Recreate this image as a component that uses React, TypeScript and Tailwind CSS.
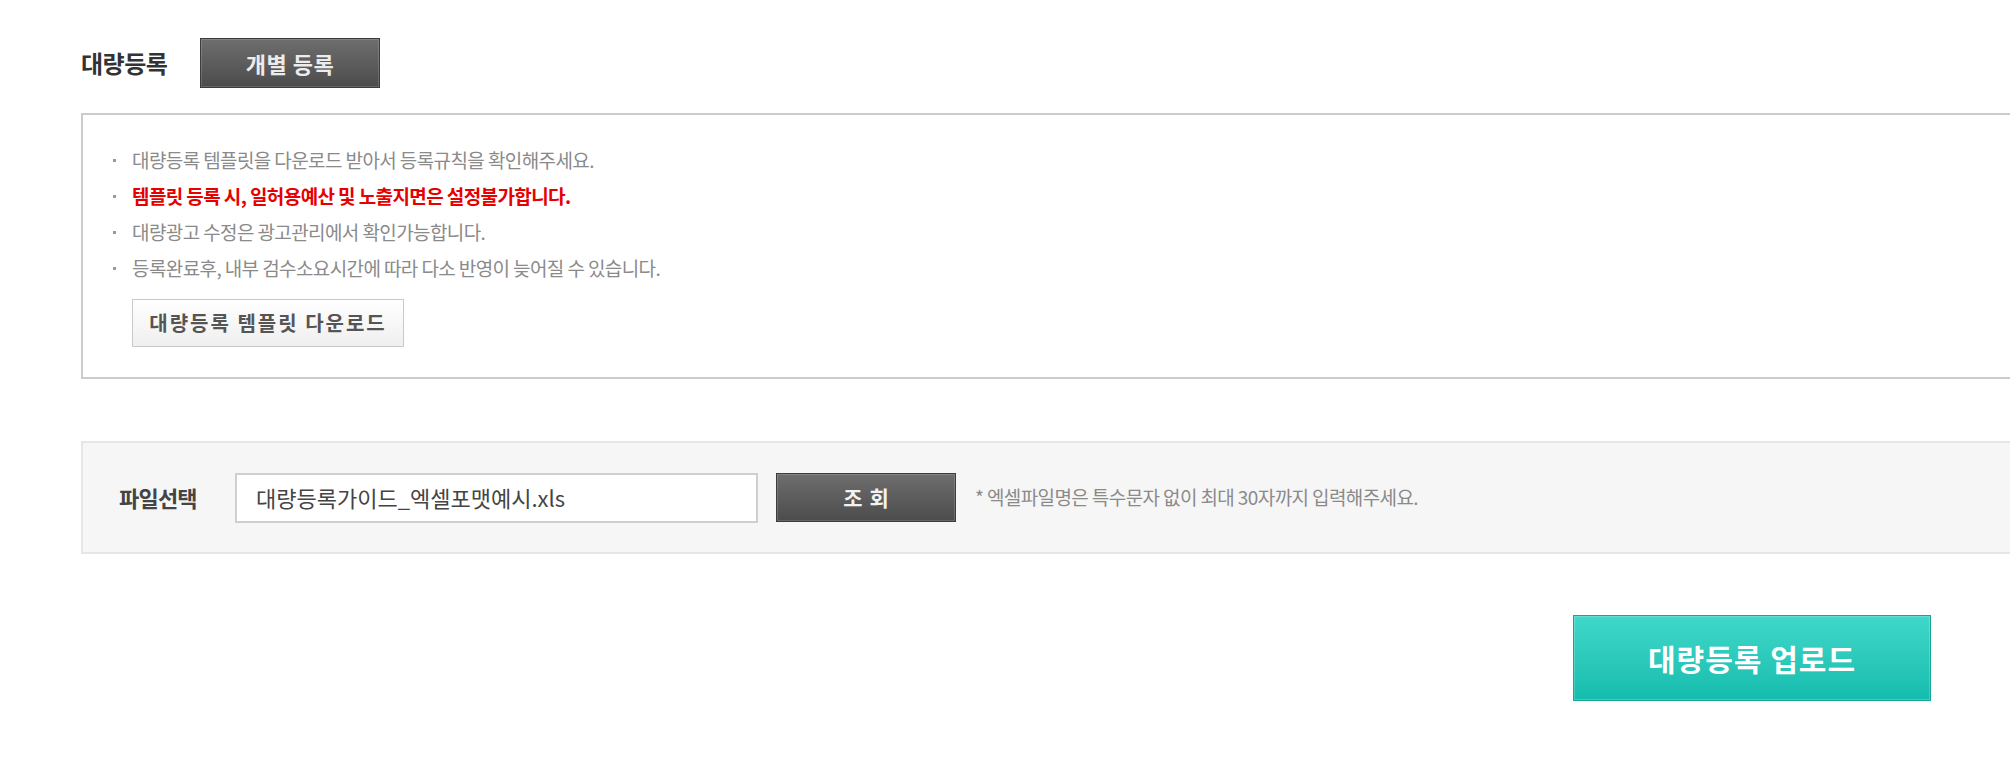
import React from "react";

const notes = [
  { text: "대량등록 템플릿을 다운로드 받아서 등록규칙을 확인해주세요.", red: false },
  { text: "템플릿 등록 시, 일허용예산 및 노출지면은 설정불가합니다.", red: true },
  { text: "대량광고 수정은 광고관리에서 확인가능합니다.", red: false },
  { text: "등록완료후, 내부 검수소요시간에 따라 다소 반영이 늦어질 수 있습니다.", red: false },
];

const App = () => {
  return (
    <div className="w-full min-h-[758px] overflow-hidden bg-white font-['Noto_Sans_CJK_KR','Noto_Sans',sans-serif]">
      <div className="pl-[81px] pt-[38px]">
        {/* title row */}
        <div className="flex items-center h-[50px]">
          <h2 className="text-[24px] font-bold text-[#333] tracking-[-0.5px] w-[119px]">대량등록</h2>
          <button className="w-[180px] h-[50px] border border-[#3c3c3c] bg-gradient-to-b from-[#6e6e6e] to-[#4c4c4c] shadow-[inset_0_0_0_1px_rgba(255,255,255,0.15)] text-[22px] font-bold text-[#ececec] tracking-[0.5px]">
            개별 등록
          </button>
        </div>

        {/* info box */}
        <div className="mt-[25px] w-[2000px] border-2 border-[#cbcbcb] pl-[30px] pt-[27px] pb-[30px]">
          <ul>
            {notes.map((n) => (
              <li key={n.text} className="flex items-center h-[36px]">
                <span className="w-[3px] h-[3px] bg-[#999] mr-[16px]" />
                <span
                  className={
                    n.red
                      ? "text-[19px] font-bold text-[#e60000] tracking-[-0.6px]"
                      : "text-[19px] text-[#8a8a8a] tracking-[-0.6px]"
                  }
                >
                  {n.text}
                </span>
              </li>
            ))}
          </ul>
          <button className="mt-[13px] ml-[19px] w-[272px] h-[48px] border border-[#c9c9c9] bg-gradient-to-b from-white to-[#efefef] text-[20px] font-semibold text-[#555] tracking-[2px]">
            대량등록 템플릿 다운로드
          </button>
        </div>

        {/* file select */}
        <div className="mt-[62px] w-[2000px] h-[113px] border-2 border-[#e6e6e6] bg-[#f6f6f6] flex items-center pl-[36px]">
          <span className="w-[116px] text-[22px] font-bold text-[#444] tracking-[-0.8px]">파일선택</span>
          <div className="w-[523px] h-[50px] border-2 border-[#cfcfcf] bg-white flex items-center pl-[19px] text-[22px] text-[#444]">
            대량등록가이드_엑셀포맷예시.xls
          </div>
          <button className="ml-[18px] w-[180px] h-[49px] border border-[#3c3c3c] bg-gradient-to-b from-[#6e6e6e] to-[#4c4c4c] shadow-[inset_0_0_0_1px_rgba(255,255,255,0.15)] text-[21px] font-bold text-[#f2f2f2] tracking-[7px] pl-[7px]">
            조회
          </button>
          <span className="ml-[19px] text-[19px] text-[#8a8a8a] tracking-[-0.6px]">
            * 엑셀파일명은 특수문자 없이 최대 30자까지 입력해주세요.
          </span>
        </div>

        {/* upload */}
        <div className="mt-[61px] w-[1850px] flex justify-end">
          <button className="w-[358px] h-[86px] border border-[#17a596] bg-gradient-to-b from-[#3fd8ca] to-[#12bcad] shadow-[inset_0_0_0_1px_rgba(255,255,255,0.2)] text-[30px] font-bold text-white tracking-[1px]">
            대량등록 업로드
          </button>
        </div>
      </div>
    </div>
  );
};

export default App;
